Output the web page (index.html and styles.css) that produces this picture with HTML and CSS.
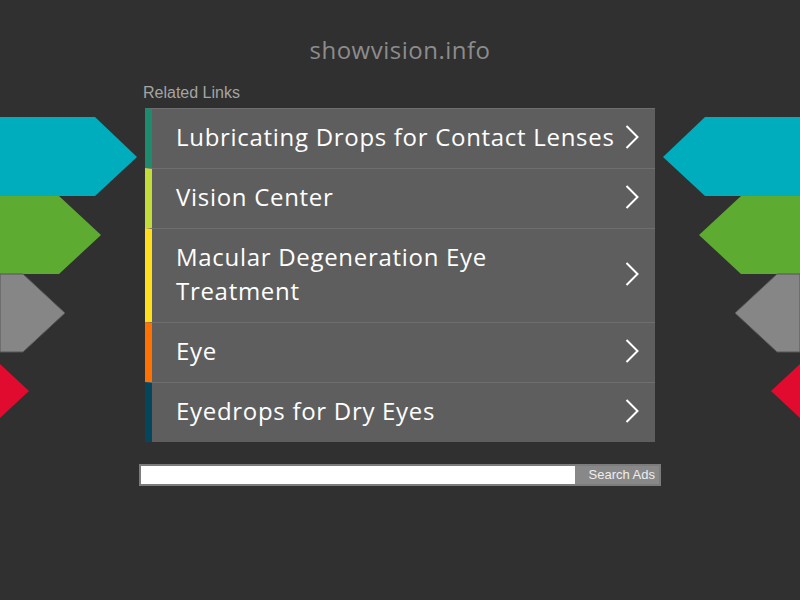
FILE: index.html
```html
<!DOCTYPE html>
<html>
<head>
<meta charset="utf-8">
<title>showvision.info</title>
<link rel="stylesheet" href="styles.css">
</head>
<body>
<svg class="deco deco-left" width="140" height="320" viewBox="0 0 140 320">
  <polygon points="0,0 95,0 137,40 95,79 0,79" fill="#00adbd"/>
  <polygon points="0,79 59,79 101,118 59,157 0,157" fill="#5dab30"/>
  <polygon points="0,157 23,157 65,196 23,235 0,235" fill="#868686" stroke="#555" stroke-width="1"/>
  <polygon points="-13,235 29,274 -13,313" fill="#e00b2e"/>
</svg>
<svg class="deco deco-right" width="140" height="320" viewBox="0 0 140 320">
  <polygon points="140,0 45,0 3,40 45,79 140,79" fill="#00adbd"/>
  <polygon points="140,79 81,79 39,118 81,157 140,157" fill="#5dab30"/>
  <polygon points="140,157 117,157 75,196 117,235 140,235" fill="#868686" stroke="#555" stroke-width="1"/>
  <polygon points="153,235 111,274 153,313" fill="#e00b2e"/>
</svg>
<main class="page">
  <h1 class="title">showvision.info</h1>
  <section class="related">
    <div class="label">Related Links</div>
    <ul class="links">
      <li class="link c1"><span class="text">Lubricating Drops for Contact Lenses</span><svg class="chev" width="14" height="24" viewBox="0 0 14 24"><polyline points="1.5,1 12.5,12 1.5,23" fill="none" stroke="#fff" stroke-width="2"/></svg></li>
      <li class="link c2"><span class="text">Vision Center</span><svg class="chev" width="14" height="24" viewBox="0 0 14 24"><polyline points="1.5,1 12.5,12 1.5,23" fill="none" stroke="#fff" stroke-width="2"/></svg></li>
      <li class="link c3"><span class="text">Macular Degeneration Eye Treatment</span><svg class="chev" width="14" height="24" viewBox="0 0 14 24"><polyline points="1.5,1 12.5,12 1.5,23" fill="none" stroke="#fff" stroke-width="2"/></svg></li>
      <li class="link c4"><span class="text">Eye</span><svg class="chev" width="14" height="24" viewBox="0 0 14 24"><polyline points="1.5,1 12.5,12 1.5,23" fill="none" stroke="#fff" stroke-width="2"/></svg></li>
      <li class="link c5"><span class="text">Eyedrops for Dry Eyes</span><svg class="chev" width="14" height="24" viewBox="0 0 14 24"><polyline points="1.5,1 12.5,12 1.5,23" fill="none" stroke="#fff" stroke-width="2"/></svg></li>
    </ul>
  </section>
  <form class="search">
    <input class="search-input" type="text">
    <button class="search-btn" type="button">Search Ads</button>
  </form>
</main>
</body>
</html>
```

FILE: styles.css
```css
html, body {
  margin: 0;
  padding: 0;
  background: #303030;
  height: 100%;
  overflow: hidden;
}
body {
  font-family: "Open Sans", "Noto Sans", sans-serif;
  position: relative;
}
.deco {
  position: absolute;
  top: 117px;
}
.deco-left { left: 0; }
.deco-right { right: 0; }
.page {
  display: flex;
  flex-direction: column;
  align-items: center;
}
.title {
  margin: 33px 0 0;
  height: 34px;
  line-height: 34px;
  font-size: 24px;
  font-weight: 400;
  color: #8c8c8c;
  letter-spacing: 0.5px;
}
.related {
  width: 510px;
  margin-top: 17px;
}
.label {
  font-family: "Liberation Sans", Arial, sans-serif;
  font-size: 16px;
  color: #a4a4a4;
  height: 24px;
  line-height: 18px;
  margin-left: -2px;
}
.links {
  list-style: none;
  margin: 0;
  padding: 0;
  background: #5e5e5e;
}
.link {
  display: flex;
  align-items: center;
  justify-content: space-between;
  border-top: 1px solid #6e6e6e;
  border-left: 7px solid #1e8b6f;
  padding: 11px 16px 14px 24px;
  color: #fff;
  font-size: 24px;
  line-height: 34px;
  letter-spacing: 0.7px;
}
.link .text {
  max-width: 440px;
}
.c2 { border-left-color: #c2dc3a; }
.c3 { border-left-color: #ffdf1c; }
.c4 { border-left-color: #ff7200; }
.c5 { border-left-color: #04475d; }
.chev {
  flex: none;
}
.search {
  display: flex;
  width: 518px;
  margin-top: 22px;
  border: 2px solid #7c7c7c;
  background: #888;
}
.search-input {
  flex: none;
  width: 434px;
  height: 18px;
  box-sizing: border-box;
  border: 0;
  padding: 0;
  margin: 0;
  background: #fff;
}
.search-btn {
  flex: 1;
  border: 0;
  margin: 0;
  padding: 0 4px 0 0;
  background: #888;
  color: #eee;
  font-family: "Liberation Sans", Arial, sans-serif;
  font-size: 13px;
  text-align: right;
  height: 18px;
  line-height: 18px;
}
```
